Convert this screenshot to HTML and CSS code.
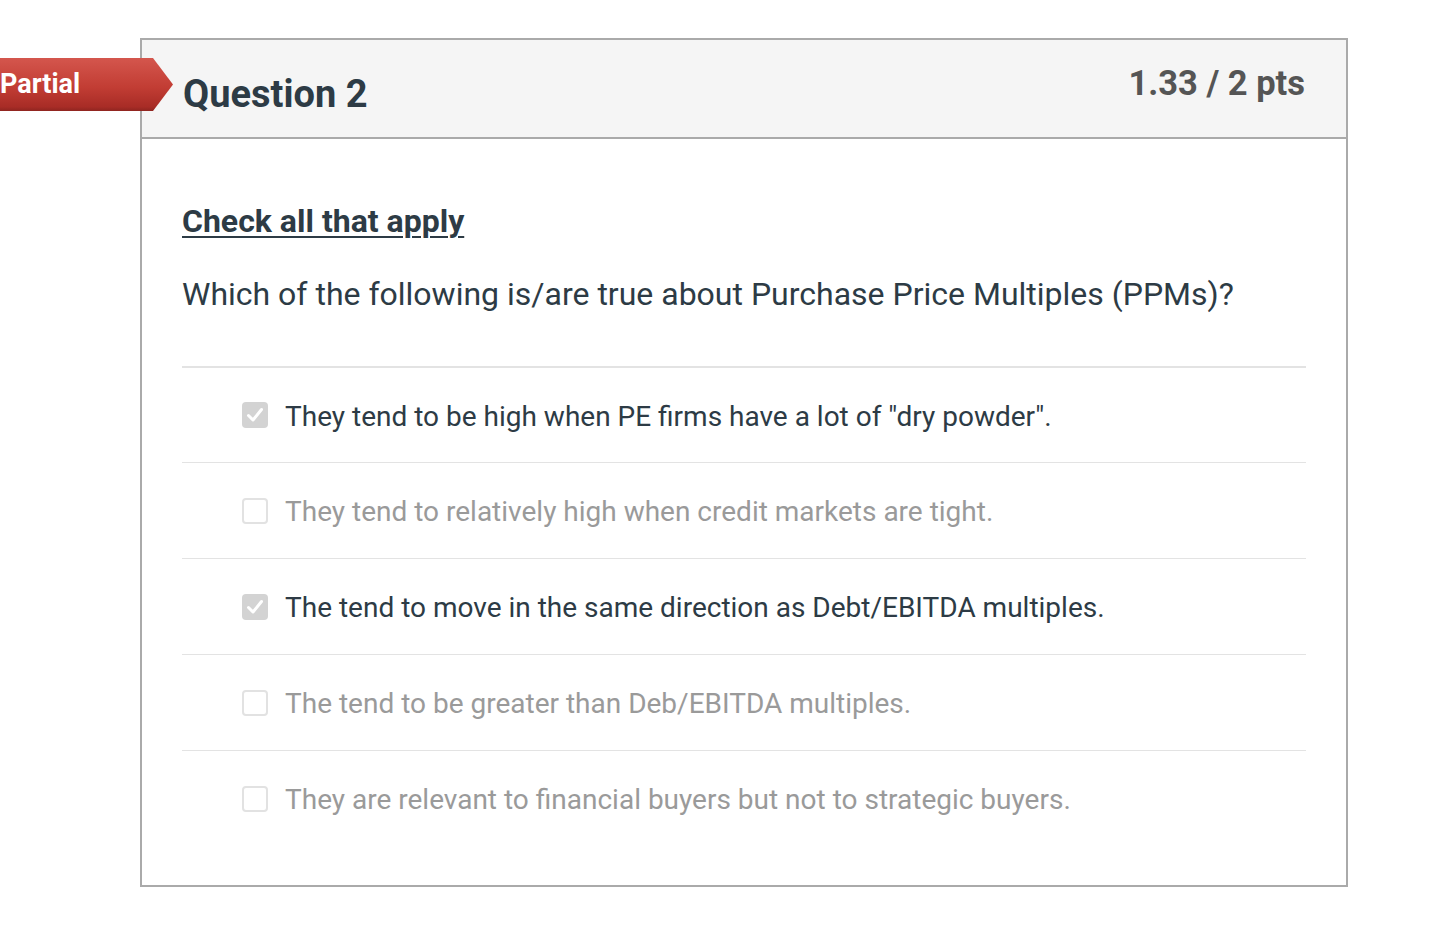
FILE: index.html
```html
<!DOCTYPE html>
<html>
<head>
<meta charset="utf-8">
<link rel="stylesheet" href="styles.css">
</head>
<body>
<div class="page">
  <div class="banner"><span>Partial</span></div>
  <div class="card">
    <div class="header">
      <h2 class="title">Question 2</h2>
      <div class="pts">1.33 / 2 pts</div>
    </div>
    <div class="body">
      <p class="instr">Check all that apply</p>
      <p class="question">Which of the following is/are true about Purchase Price Multiples (PPMs)?</p>
      <div class="answers">
        <div class="row selected"><span class="box checked"><svg viewBox="0 0 26 26" width="26" height="26"><path d="M6.5 13.5 L11 18 L19.5 7.5" fill="none" stroke="#fff" stroke-width="3" stroke-linecap="round" stroke-linejoin="round"/></svg></span><span class="label">They tend to be high when PE firms have a lot of "dry powder".</span></div>
        <div class="row"><span class="box"></span><span class="label">They tend to relatively high when credit markets are tight.</span></div>
        <div class="row selected"><span class="box checked"><svg viewBox="0 0 26 26" width="26" height="26"><path d="M6.5 13.5 L11 18 L19.5 7.5" fill="none" stroke="#fff" stroke-width="3" stroke-linecap="round" stroke-linejoin="round"/></svg></span><span class="label">The tend to move in the same direction as Debt/EBITDA multiples.</span></div>
        <div class="row"><span class="box"></span><span class="label">The tend to be greater than Deb/EBITDA multiples.</span></div>
        <div class="row"><span class="box"></span><span class="label">They are relevant to financial buyers but not to strategic buyers.</span></div>
      </div>
    </div>
  </div>
</div>
</body>
</html>
```
FILE: styles.css
```css
html, body {
  margin: 0;
  padding: 0;
  background: #fff;
  font-family: Roboto, "Liberation Sans", sans-serif;
  color: #2d3b45;
}
.page {
  position: relative;
  width: 1430px;
  height: 946px;
  padding-top: 38px;
  box-sizing: border-box;
}
.banner {
  position: absolute;
  left: 0;
  top: 58px;
  width: 173px;
  height: 53px;
  background: linear-gradient(#d4564d, #c23d34 55%, #a82c26 92%, #8f2520);
  clip-path: polygon(0 0, 153px 0, 173px 50%, 153px 100%, 0 100%);
  display: flex;
  align-items: center;
  z-index: 2;
}
.banner span {
  color: #fff;
  font-weight: 700;
  font-size: 27px;
  line-height: 1;
  margin-left: 0;
  margin-top: -1px;
}
.card {
  margin-left: 140px;
  width: 1208px;
  box-sizing: border-box;
  border: 2px solid #aaaaaa;
  background: #fff;
}
.header {
  height: 97px;
  background: #f5f5f5;
  border-bottom: 2px solid #aaaaaa;
  display: flex;
  justify-content: space-between;
  align-items: flex-start;
  padding: 0 41px;
}
.title {
  margin: 35px 0 0 0;
  font-size: 38px;
  line-height: 1;
  font-weight: 700;
  color: #2d3b45;
}
.pts {
  margin-top: 26px;
  font-size: 34.5px;
  line-height: 1;
  font-weight: 700;
  color: #555555;
}
.body {
  padding: 66px 40px 39px 40px;
}
.instr {
  margin: 0;
  font-size: 32px;
  line-height: 1;
  font-weight: 700;
  text-decoration: underline;
  text-decoration-thickness: 2px;
  text-underline-offset: 4px;
}
.question {
  margin: 41px 0 0 0;
  font-size: 32px;
  line-height: 1;
  font-weight: 400;
}
.answers {
  margin-top: 56px;
}
.row {
  height: 95px;
  border-top: 1px solid #e3e3e3;
  display: flex;
  align-items: center;
  padding-left: 60px;
  font-size: 28px;
  color: #9a9a9a;
}
.row:first-child {
  border-top: 2px solid #e3e3e3;
  height: 94px;
}
.row.selected {
  color: #2d3b45;
}
.box {
  width: 26px;
  height: 26px;
  box-sizing: border-box;
  border: 2px solid #e2e2e2;
  border-radius: 4px;
  background: #fff;
  margin-right: 17px;
  flex: none;
  display: flex;
}
.box.checked {
  border: none;
  background: #d3d3d3;
}
.box svg {
  display: block;
}
.label {
  line-height: 1;
  margin-top: 3px;
}
```
